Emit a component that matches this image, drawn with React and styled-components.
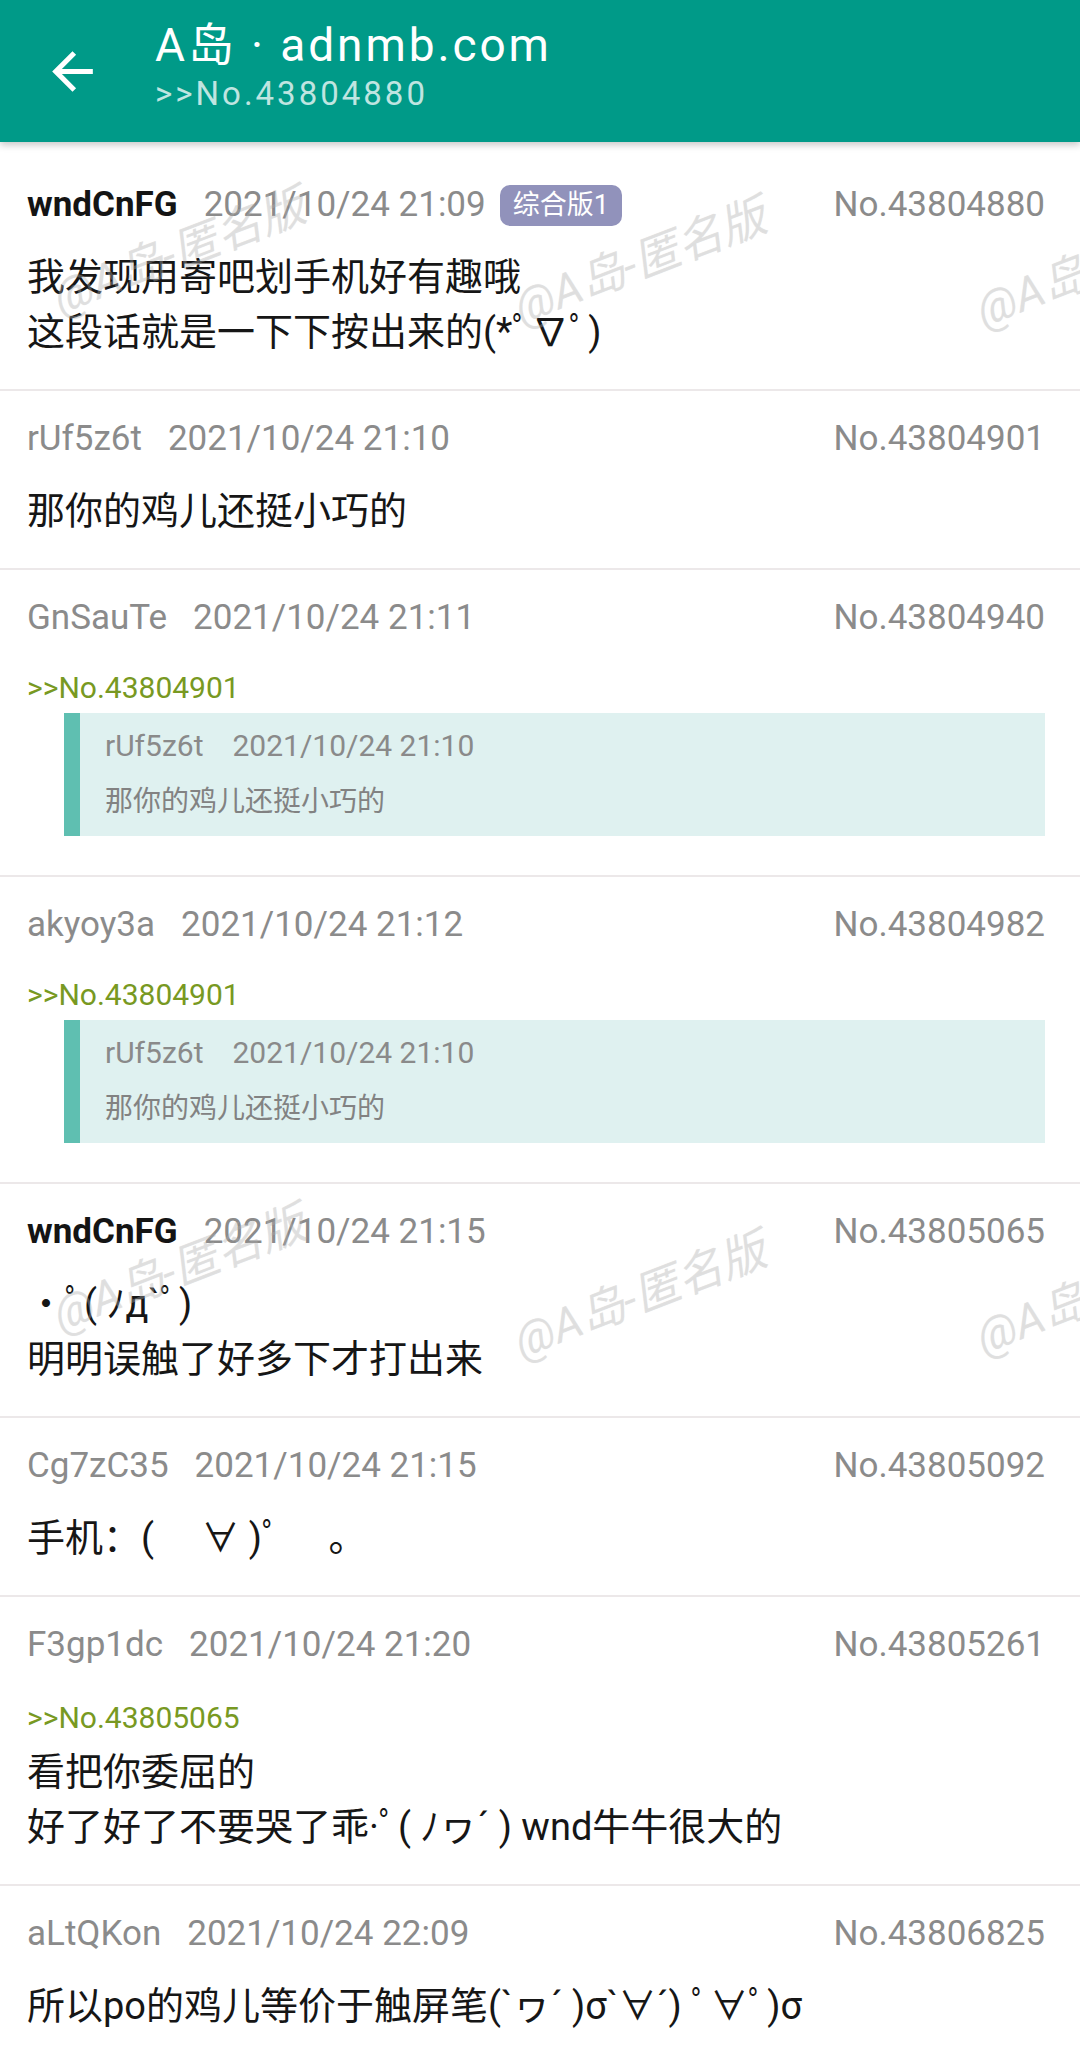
import React from 'react';
import styled, { createGlobalStyle } from 'styled-components';

const GlobalStyle = createGlobalStyle`
  html, body { margin: 0; padding: 0; background: #fff; }
  body { font-family: Roboto, "Noto Sans CJK SC", sans-serif; }
  * { box-sizing: border-box; }
`;

const Page = styled.div`
  position: relative;
  width: 1080px;
  height: 2057px;
  overflow: hidden;
  background: #fff;
`;

const Header = styled.header`
  position: relative;
  z-index: 2;
  height: 142px;
  background: #009a88;
  display: flex;
  align-items: flex-start;
  padding-left: 42px;
  box-shadow: 0 3px 7px rgba(0, 0, 0, 0.22);
`;

const BackButton = styled.div`
  width: 61px;
  height: 61px;
  align-self: center;
  display: flex;
  align-items: center;
  justify-content: center;
`;

const TitleBlock = styled.div`
  margin-left: 52px;
  padding-top: 19px;
  display: flex;
  flex-direction: column;
`;

const Title = styled.div`
  font-size: 46px;
  line-height: 52px;
  letter-spacing: 2.9px;
  color: #fff;
  white-space: nowrap;
`;

const Subtitle = styled.div`
  font-size: 33px;
  line-height: 46px;
  letter-spacing: 3px;
  color: rgba(255, 255, 255, 0.75);
`;

const List = styled.main`
  padding-top: 15px;
`;

const Post = styled.article`
  padding: 24px 35px 29px 27px;
  border-bottom: 2px solid #ece8e9;
`;

const MetaRow = styled.div`
  display: flex;
  align-items: center;
  height: 48px;
  font-size: 35px;
  line-height: 48px;
  color: #8b8b8b;
  white-space: nowrap;
`;

const Name = styled.span`
  font-weight: ${p => (p.$po ? 700 : 400)};
  color: ${p => (p.$po ? '#141414' : '#8b8b8b')};
  margin-right: 26px;
`;

const DateText = styled.span``;

const Badge = styled.span`
  margin-left: 14px;
  height: 41px;
  padding: 0 13px;
  border-radius: 10px;
  background: #9192bb;
  color: #fff;
  font-size: 27px;
  line-height: 41px;
`;

const PostNo = styled.span`
  margin-left: auto;
`;

const Body = styled.div`
  margin-top: 21px;
  font-size: 38px;
  line-height: 55px;
  color: #161616;
`;

const Line = styled.div`
  white-space: pre;
`;

const GreenLink = styled.div`
  font-size: 30px;
  line-height: ${p => (p.$compact ? '50px' : '55px')};
  color: #789922;
`;

const QuoteBlock = styled.div`
  margin: 0 0 10px 37px;
  background: #dff1f0;
  border-left: 16px solid #5fbfb1;
  padding: 13px 0 14px 25px;
`;

const QuoteMeta = styled.div`
  display: flex;
  font-size: 30px;
  line-height: 40px;
  color: #8a8a8a;
`;

const QuoteName = styled.span`
  margin-right: 29px;
`;

const QuoteText = styled.div`
  margin-top: 16px;
  font-size: 28px;
  line-height: 40px;
  color: #828282;
`;

const WatermarkLayer = styled.div`
  position: absolute;
  inset: 0;
  pointer-events: none;
  z-index: 3;
`;

const Mark = styled.span`
  position: absolute;
  left: ${p => p.$x}px;
  top: ${p => p.$y}px;
  transform: rotate(-21deg);
  transform-origin: 0 50%;
  font-size: 46px;
  line-height: 50px;
  font-weight: 400;
  font-style: italic;
  color: rgba(190, 190, 190, 0.36);
  text-shadow: 0 0 1px rgba(0, 0, 0, 0.06);
  white-space: nowrap;
`;

const BackIcon = () => (
  <svg width="61" height="61" viewBox="0 0 24 24" fill="#fff">
    <path d="M20 11H7.83l5.59-5.59L12 4l-8 8 8 8 1.41-1.41L7.83 13H20v-2z" />
  </svg>
);

const quoted = { name: 'rUf5z6t', date: '2021/10/24 21:10', text: '那你的鸡儿还挺小巧的' };

const posts = [
  { name: 'wndCnFG', po: true, date: '2021/10/24 21:09', badge: '综合版1', no: 'No.43804880',
    lines: ['我发现用寄吧划手机好有趣哦', '这段话就是一下下按出来的(*ﾟ∇ﾟ)'] },
  { name: 'rUf5z6t', date: '2021/10/24 21:10', no: 'No.43804901', lines: ['那你的鸡儿还挺小巧的'] },
  { name: 'GnSauTe', date: '2021/10/24 21:11', no: 'No.43804940', ref: '>>No.43804901', quote: quoted },
  { name: 'akyoy3a', date: '2021/10/24 21:12', no: 'No.43804982', ref: '>>No.43804901', quote: quoted },
  { name: 'wndCnFG', po: true, date: '2021/10/24 21:15', no: 'No.43805065',
    lines: ['·ﾟ( ﾉд`ﾟ)', '明明误触了好多下才打出来'] },
  { name: 'Cg7zC35', date: '2021/10/24 21:15', no: 'No.43805092', lines: ['手机：(　 ∀ )ﾟ　 。'] },
  { name: 'F3gp1dc', date: '2021/10/24 21:20', no: 'No.43805261', ref: '>>No.43805065',
    lines: ['看把你委屈的', '好了好了不要哭了乖·ﾟ( ﾉヮ´ ) wnd牛牛很大的'] },
  { name: 'aLtQKon', date: '2021/10/24 22:09', no: 'No.43806825',
    lines: ['所以po的鸡儿等价于触屏笔(`ヮ´ )σ`∀´) ﾟ∀ﾟ)σ'] },
];

const marks = [
  [55, 274], [516, 284], [978, 287],
  [55, 1291], [516, 1318], [978, 1314],
];

export default function App() {
  return (
    <Page>
      <GlobalStyle />
      <Header>
        <BackButton><BackIcon /></BackButton>
        <TitleBlock>
          <Title>A岛 · adnmb.com</Title>
          <Subtitle>&gt;&gt;No.43804880</Subtitle>
        </TitleBlock>
      </Header>
      <List>
        {posts.map((p, i) => (
          <Post key={i}>
            <MetaRow>
              <Name $po={p.po}>{p.name}</Name>
              <DateText>{p.date}</DateText>
              {p.badge && <Badge>{p.badge}</Badge>}
              <PostNo>{p.no}</PostNo>
            </MetaRow>
            <Body>
              {p.ref && <GreenLink $compact={!!p.quote}>{p.ref}</GreenLink>}
              {p.quote && (
                <QuoteBlock>
                  <QuoteMeta>
                    <QuoteName>{p.quote.name}</QuoteName>
                    <span>{p.quote.date}</span>
                  </QuoteMeta>
                  <QuoteText>{p.quote.text}</QuoteText>
                </QuoteBlock>
              )}
              {p.lines && p.lines.map((l, j) => <Line key={j}>{l}</Line>)}
            </Body>
          </Post>
        ))}
      </List>
      <WatermarkLayer>
        {marks.map(([x, y], i) => (
          <Mark key={i} $x={x} $y={y}>@A岛-匿名版</Mark>
        ))}
      </WatermarkLayer>
    </Page>
  );
}
